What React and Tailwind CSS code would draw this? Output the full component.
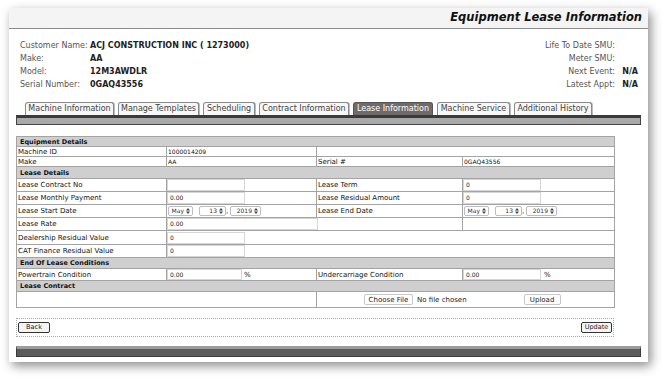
import React from "react";

const F = { fontFamily: '"DejaVu Sans", Verdana, sans-serif' };

function Arrows() {
  return (
    <svg width="4" height="6" viewBox="0 0 4 6" className="ml-[2px] inline-block">
      <path d="M0 2.5 L2 0 L4 2.5 Z M0 3.5 L2 6 L4 3.5 Z" fill="#444" />
    </svg>
  );
}

function Sel({ v, w }) {
  return (
    <span
      className={`inline-flex items-center justify-end h-[10px] border border-[#bdbdbd] rounded-[2px] bg-white text-[6px] leading-none text-[#333] pr-[2px] ${w}`}
    >
      {v}
      <Arrows />
    </span>
  );
}

function DateSel() {
  return (
    <div className="flex items-center pl-[1px]">
      <Sel v="May" w="w-[25px]" />
      <span className="w-[6px]" />
      <Sel v="13" w="w-[27px]" />
      <span className="w-[4px] text-[7px] leading-none">,</span>
      <Sel v="2019" w="w-[31px]" />
    </div>
  );
}

function Inp({ v = "", w = "w-[78px]", h = "h-[12px]" }) {
  return (
    <div className={`${h} ${w} border border-[#d6d6d6] bg-white text-[6px] leading-none pl-[2px] flex items-center text-[#222]`}>
      {v}
    </div>
  );
}

const td = "border border-[#a3a3a3] p-0 align-middle leading-[8px]";
const lbl = `${td} pl-[1px] text-[7px] text-[#111]`;

function Head({ t, h }) {
  return (
    <tr className={h}>
      <td colSpan={4} className={`${td} bg-[#cfcfcf] pl-[3px] text-[6.5px] font-bold text-[#111]`}>
        {t}
      </td>
    </tr>
  );
}

export default function App() {
  const tabs = [
    ["Machine Information", "w-[89px]"],
    ["Manage Templates", "w-[81px]"],
    ["Scheduling", "w-[52px]"],
    ["Contract Information", "w-[90px]"],
    ["Lease Information", "w-[80px]"],
    ["Machine Service", "w-[73px]"],
    ["Additional History", "w-[78px]"],
  ];
  return (
    <div className="w-[662px] h-[378px] bg-white overflow-hidden" style={F}>
      <div className="ml-[9px] mt-[8px] w-[639px] h-[354px] bg-white shadow-[3px_4px_10px_rgba(0,0,0,0.45)] flex flex-col">
        <div className="h-[21px] shrink-0 bg-[#f4f4f4] border-b border-[#8c8c8c] flex items-center justify-end pr-[6px]">
          <span className="text-[11.5px] font-bold italic text-[#111] leading-none">Equipment Lease Information</span>
        </div>

        <div className="flex justify-between pl-[11px] pr-[10px] pt-[10px] text-[8px] leading-[13px]">
          <div className="grid grid-cols-[70px_auto]">
            <span className="text-[#555]">Customer Name:</span>
            <span className="font-bold text-[#222]">ACJ CONSTRUCTION INC ( 1273000)</span>
            <span className="text-[#555]">Make:</span>
            <span className="font-bold text-[#222]">AA</span>
            <span className="text-[#555]">Model:</span>
            <span className="font-bold text-[#222]">12M3AWDLR</span>
            <span className="text-[#555]">Serial Number:</span>
            <span className="font-bold text-[#222]">0GAQ43556</span>
          </div>
          <div className="grid grid-cols-[auto_23px] text-right">
            <span className="text-[#555]">Life To Date SMU:</span>
            <span></span>
            <span className="text-[#555]">Meter SMU:</span>
            <span></span>
            <span className="text-[#555]">Next Event:</span>
            <span className="font-bold text-[#222]">N/A</span>
            <span className="text-[#555]">Latest Appt:</span>
            <span className="font-bold text-[#222]">N/A</span>
          </div>
        </div>

        <div className="flex gap-[4px] pl-[16px] mt-[11px]">
          {tabs.map(([t, w]) => {
            const active = t === "Lease Information";
            return (
              <div
                key={t}
                className={`${w} h-[13px] rounded-t-[3px] border border-b-0 flex items-center justify-center text-[8px] leading-none whitespace-nowrap ${
                  active ? "bg-[#6f6b6b] border-[#555] text-white" : "bg-[#f7f7f7] border-[#8a8a8a] text-[#444] shadow-[1px_0_0_#bbb]"
                }`}
              >
                {t}
              </div>
            );
          })}
        </div>
        <div className="mx-[7px] h-[10px] shrink-0 bg-[#a9a9a9] border border-[#444] border-t-[3px] border-t-[#3a3a3a]" />

        <div className="mt-[11px] ml-[7px] w-[598px]">
          <table className="w-full border-collapse table-fixed text-[#111]">
            <colgroup>
              <col className="w-[150px]" />
              <col className="w-[150px]" />
              <col className="w-[146px]" />
              <col className="w-[152px]" />
            </colgroup>
            <tbody>
              <Head t="Equipment Details" h="h-[10px]" />
              <tr className="h-[10px]">
                <td className={lbl}>Machine ID</td>
                <td className={`${td} text-[6px] pl-[1px]`}>1000014209</td>
                <td colSpan={2} className={td}></td>
              </tr>
              <tr className="h-[10px]">
                <td className={lbl}>Make</td>
                <td className={`${td} text-[6px] pl-[1px]`}>AA</td>
                <td className={lbl}>Serial #</td>
                <td className={`${td} text-[6px] pl-[1px]`}>0GAQ43556</td>
              </tr>
              <Head t="Lease Details" h="h-[12px]" />
              <tr className="h-[13px]">
                <td className={lbl}>Lease Contract No</td>
                <td className={td}><Inp /></td>
                <td className={lbl}>Lease Term</td>
                <td className={td}><Inp v="0" /></td>
              </tr>
              <tr className="h-[13px]">
                <td className={lbl}>Lease Monthly Payment</td>
                <td className={td}><Inp v="0.00" /></td>
                <td className={lbl}>Lease Residual Amount</td>
                <td className={td}><Inp v="0" /></td>
              </tr>
              <tr className="h-[13px]">
                <td className={lbl}>Lease Start Date</td>
                <td className={td}><DateSel /></td>
                <td className={lbl}>Lease End Date</td>
                <td className={td}><DateSel /></td>
              </tr>
              <tr className="h-[13px]">
                <td className={lbl}>Lease Rate</td>
                <td colSpan={2} className={`${td} border-r-0`}><Inp v="0.00" w="w-[151px]" /></td>
                <td className={`${td} border-l`}></td>
              </tr>
              <tr className="h-[14px]">
                <td className={lbl}>Dealership Residual Value</td>
                <td colSpan={3} className={td}><Inp v="0" /></td>
              </tr>
              <tr className="h-[13px]">
                <td className={lbl}>CAT Finance Residual Value</td>
                <td colSpan={3} className={td}><Inp v="0" /></td>
              </tr>
              <Head t="End Of Lease Conditions" h="h-[11px]" />
              <tr className="h-[12px]">
                <td className={lbl}>Powertrain Condition</td>
                <td className={td}>
                  <div className="flex items-center"><Inp v="0.00" w="w-[75px]" h="h-[11px]" /><span className="text-[7px] ml-[2px]">%</span></div>
                </td>
                <td className={lbl}>Undercarriage Condition</td>
                <td className={td}>
                  <div className="flex items-center"><Inp v="0.00" w="w-[78px]" h="h-[11px]" /><span className="text-[7px] ml-[3px]">%</span></div>
                </td>
              </tr>
              <Head t="Lease Contract" h="h-[11px]" />
              <tr className="h-[16px]">
                <td colSpan={2} className={td}></td>
                <td colSpan={2} className={td}>
                  <div className="flex items-center pl-[47px] text-[7px] text-[#222]">
                    <span className="h-[11px] w-[49px] border border-[#c8c8c8] rounded-[2px] bg-white flex items-center justify-center">Choose File</span>
                    <span className="ml-[4px]">No file chosen</span>
                    <span className="ml-[57px] h-[11px] w-[37px] border border-[#c8c8c8] rounded-[2px] bg-white flex items-center justify-center">Upload</span>
                  </div>
                </td>
              </tr>
            </tbody>
          </table>
        </div>

        <div className="mt-[10px] ml-[7px] w-[598px] h-[19px] shrink-0 border border-dotted border-[#aaa] flex items-center justify-between px-[1px]">
          <span className="h-[11px] w-[32px] border border-[#333] rounded-[2px] bg-[#f4f4f4] text-[6.5px] leading-none flex items-center justify-center text-[#222]">Back</span>
          <span className="h-[11px] w-[31px] border border-[#333] rounded-[2px] bg-[#f4f4f4] text-[6.5px] leading-none flex items-center justify-center text-[#222]">Update</span>
        </div>

        <div className="mt-[9px] mx-[7px] h-[11px] shrink-0 bg-[#5b5b5b] border border-[#3a3a3a] border-t-[3px] border-t-[#9c9c9c]" />
      </div>
    </div>
  );
}
